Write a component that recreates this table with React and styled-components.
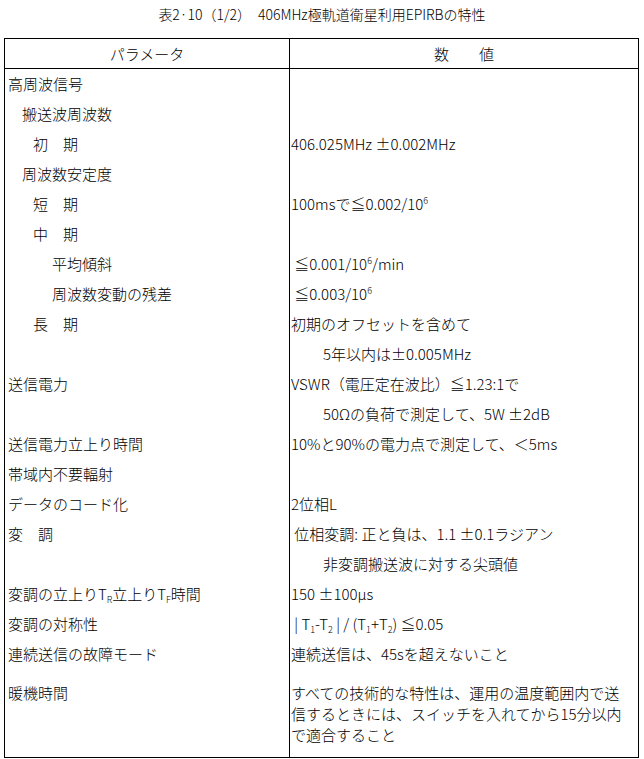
import React from "react";
import styled, { createGlobalStyle } from "styled-components";

const GlobalStyle = createGlobalStyle`
  html, body {
    margin: 0;
    padding: 0;
    background: #ffffff;
  }
  body {
    font-family: "Noto Sans CJK JP", "Noto Sans", sans-serif;
    font-weight: 300;
    color: #000000;
  }
`;

const Page = styled.div`
  width: 644px;
  height: 759px;
  box-sizing: border-box;
`;

const Title = styled.h1`
  margin: 0 0 10px 0;
  height: 28px;
  line-height: 28px;
  font-size: 14px;
  font-weight: 300;
  text-align: center;
  white-space: pre;
`;

const Table = styled.div`
  margin-left: 4px;
  width: 635px;
  box-sizing: border-box;
  border: 1px solid #000;
  display: grid;
  grid-template-columns: 285px 1fr;
  grid-auto-rows: auto;
  font-size: 15px;
`;

const HeadCell = styled.div`
  height: 29px;
  line-height: 29px;
  text-align: center;
  border-bottom: 1px solid #000;
  border-right: ${(p) => (p.$left ? "1px solid #000" : "none")};
  white-space: pre;
`;

const Cell = styled.div`
  box-sizing: border-box;
  height: ${(p) => (p.$tall ? "88px" : "30px")};
  line-height: ${(p) => (p.$tall ? "21px" : "30px")};
  padding-top: ${(p) => (p.$tall ? "13px" : "0")};
  padding-left: ${(p) => p.$indent}px;
  border-right: ${(p) => (p.$left ? "1px solid #000" : "none")};
  white-space: pre;
  overflow: hidden;
`;

const Sup = styled.sup`
  font-size: 9px;
  line-height: 0;
  vertical-align: 6px;
`;

const Sub = styled.sub`
  font-size: 9px;
  line-height: 0;
  vertical-align: -3px;
`;

const rows = [
  { l: "高周波信号", li: 0, r: null },
  { l: "搬送波周波数", li: 1, r: null },
  { l: "初　期", li: 2, r: "406.025MHz ±0.002MHz" },
  { l: "周波数安定度", li: 1, r: null },
  {
    l: "短　期",
    li: 2,
    r: (
      <>
        100msで≦0.002/10<Sup>6</Sup>
      </>
    ),
  },
  { l: "中　期", li: 2, r: null },
  {
    l: "平均傾斜",
    li: 3,
    r: (
      <>
        {" "}≦0.001/10<Sup>6</Sup>/min
      </>
    ),
  },
  {
    l: "周波数変動の残差",
    li: 3,
    r: (
      <>
        {" "}≦0.003/10<Sup>6</Sup>
      </>
    ),
  },
  { l: "長　期", li: 2, r: "初期のオフセットを含めて" },
  { l: "", li: 0, r: "5年以内は±0.005MHz", ri: true },
  { l: "送信電力", li: 0, r: "VSWR（電圧定在波比）≦1.23:1で" },
  { l: "", li: 0, r: "50Ωの負荷で測定して、5W ±2dB", ri: true },
  { l: "送信電力立上り時間", li: 0, r: "10%と90%の電力点で測定して、＜5ms" },
  { l: "帯域内不要輻射", li: 0, r: null },
  { l: "データのコード化", li: 0, r: "2位相L" },
  { l: "変　調", li: 0, r: " 位相変調: 正と負は、1.1 ±0.1ラジアン" },
  { l: "", li: 0, r: "非変調搬送波に対する尖頭値", ri: true },
  {
    l: (
      <>
        変調の立上りT<Sub>R</Sub>立上りT<Sub>F</Sub>時間
      </>
    ),
    li: 0,
    r: "150 ±100μs",
  },
  {
    l: "変調の対称性",
    li: 0,
    r: (
      <>
        {" "}| T<Sub>1</Sub>-T<Sub>2</Sub> | / (T<Sub>1</Sub>+T<Sub>2</Sub>) ≦0.05
      </>
    ),
  },
  { l: "連続送信の故障モード", li: 0, r: "連続送信は、45sを超えないこと" },
  {
    l: "暖機時間",
    li: 0,
    tall: true,
    r: (
      <>
        すべての技術的な特性は、運用の温度範囲内で送
        <br />
        信するときには、スイッチを入れてから15分以内
        <br />
        で適合すること
      </>
    ),
  },
];

const leftIndent = [3, 17, 28, 47];

export default function App() {
  return (
    <Page>
      <GlobalStyle />
      <Title>{"表2·10（1/2）　406MHz極軌道衛星利用EPIRBの特性"}</Title>
      <Table>
        <HeadCell $left>パラメータ</HeadCell>
        <HeadCell>{"数　　値"}</HeadCell>
        {rows.map((row, i) => (
          <React.Fragment key={i}>
            <Cell $left $indent={leftIndent[row.li]} $tall={row.tall}>
              {row.l}
            </Cell>
            <Cell $indent={row.ri ? 33 : 1} $tall={row.tall}>
              {row.r}
            </Cell>
          </React.Fragment>
        ))}
      </Table>
    </Page>
  );
}
